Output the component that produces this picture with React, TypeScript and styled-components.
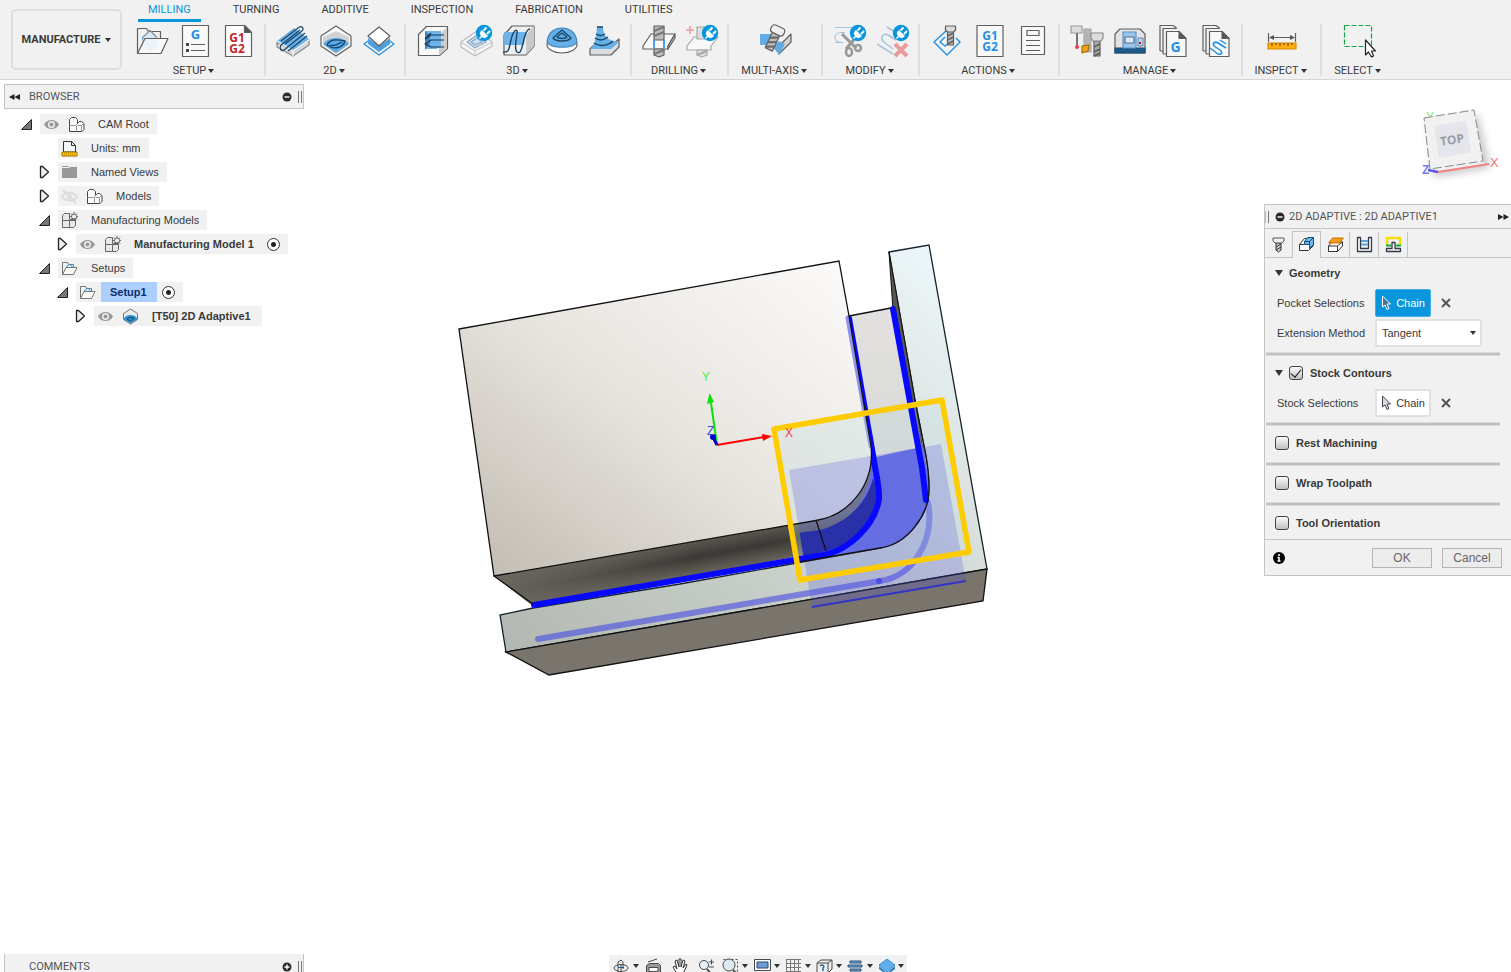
import React, { ReactNode } from "react";
import styled, { createGlobalStyle } from "styled-components";

const UI = `Roboto, "Liberation Sans", sans-serif`;
const BODY = `"Liberation Sans", Arial, sans-serif`;

const GlobalStyle = createGlobalStyle`
  * { box-sizing: border-box; }
  body { margin: 0; background: #fff; color: #3a3a3a; font: 11px/16px ${BODY}; }
  button, select, input { font: inherit; color: inherit; margin: 0; padding: 0; }
  svg { display: block; }
`;

/* ---------- page ---------- */
const Page = styled.div`
  display: flex;
  flex-direction: column;
  height: 100vh;
  overflow: hidden;
`;
const Header = styled.header`
  display: flex;
  flex: none;
  height: 80px;
  background: #f1f1f1;
  border-bottom: 1px solid #d6d6d6;
  font-family: ${UI};
`;
const WorkspaceButton = styled.button`
  display: flex;
  align-items: center;
  justify-content: center;
  gap: 5px;
  width: 111px;
  height: 61px;
  margin: 9px 3px 0 11px;
  border: 2px solid #dedede;
  border-radius: 5px;
  background: #f1f1f1;
  font-weight: 700;
`;
const Caret = styled.span`
  border: 3px solid transparent;
  border-top: 4px solid #333;
  border-bottom: 0;
`;
const Ribbon = styled.div`
  flex: 1;
  min-width: 0;
`;
const Tabs = styled.nav`
  display: flex;
  gap: 22px;
  height: 22px;
  padding-left: 13px;
`;
const Tab = styled.button<{ $active?: boolean }>`
  height: 22px;
  padding: 0 10px;
  border: 0;
  border-bottom: 3px solid ${(p) => (p.$active ? "#0a96dc" : "transparent")};
  background: none;
  color: ${(p) => (p.$active ? "#0a96dc" : "#3a3a3a")};
`;
const Groups = styled.div`
  display: flex;
`;
const Group = styled.section<{ $min?: number }>`
  display: flex;
  flex-direction: column;
  align-items: center;
  height: 52px;
  margin-top: 2px;
  min-width: ${(p) => p.$min ?? 0}px;
  padding: 0 4px 0 5px;
  border-right: 2px solid #dedede;
  &:last-child { border-right-color: transparent; }
`;
const Tools = styled.div`
  display: flex;
`;
const Tool = styled.button`
  display: grid;
  place-items: center;
  width: 43px;
  height: 34px;
  border: 0;
  background: none;
`;
const GroupLabel = styled.button`
  display: flex;
  align-items: center;
  gap: 2px;
  height: 16px;
  margin: 5px 3px 0 0;
  border: 0;
  background: none;
`;

const Workspace = styled.main`
  display: flex;
  flex: 1;
  min-height: 0;
`;
const BrowserColumn = styled.aside`
  width: 304px;
  flex: none;
  padding: 4px 0 0 4px;
`;
const PanelBar = styled.div`
  display: flex;
  align-items: center;
  height: 25px;
  padding: 0 1px 0 4px;
  border: 1px solid #c4c4c4;
  background: #f1f1f1;
  color: #555;
  font-family: ${UI};
`;
const BarTitle = styled.h2`
  flex: 1;
  margin: 0;
  font-size: 11px;
  font-weight: 400;
`;
const BarButton = styled.button`
  display: grid;
  place-items: center;
  width: 12px;
  height: 16px;
  border: 0;
  background: none;
`;
const CollapseButton = styled(BarButton)`
  width: 20px;
  justify-items: start;
`;
const Grip = styled.span`
  width: 4px;
  height: 12px;
  margin-left: 5px;
  border: 1px solid #777;
  border-width: 0 1px;
`;
const Tree = styled.ul`
  margin: 0;
  padding: 3px 0 0;
  list-style: none;
`;
const TreeRow = styled.li<{ $level: number }>`
  display: flex;
  align-items: center;
  height: 24px;
  padding-left: ${(p) => 14 + 18 * p.$level}px;
`;
const Twisty = styled.button`
  display: grid;
  place-items: center;
  width: 22px;
  height: 16px;
  padding-right: 6px;
  border: 0;
  background: none;
`;
const Item = styled.div`
  display: flex;
  align-items: center;
  height: 20px;
  padding-right: 3px;
  background: #f1f1f1;
`;
const Slot = styled.span<{ $gap?: boolean }>`
  display: grid;
  place-items: center;
  width: 22px;
  margin-right: ${(p) => (p.$gap ? 3 : 0)}px;
`;
const ItemLabel = styled.span<{ $bold?: boolean; $selected?: boolean }>`
  height: 20px;
  line-height: 20px;
  padding: 0 ${(p) => (p.$bold ? 8 : 5)}px 0 11px;
  font-weight: ${(p) => (p.$bold ? 700 : 400)};
  ${(p) => p.$selected && "margin-left: 3px; padding: 0 10px 0 9px; background: #abd0ff; color: #0b2f6b;"}
`;
const ActiveRadio = styled.input`
  appearance: none;
  width: 13px;
  height: 13px;
  margin: 0 5px;
  border: 1px solid #333;
  border-radius: 50%;
  background: radial-gradient(circle, #222 0 2px, #fff 3px);
`;

const Scene = styled.div`
  flex: 1;
  min-width: 0;
  svg { width: 100%; height: 100%; }
`;
const RightColumn = styled.aside`
  width: 247px;
  flex: none;
`;

/* ---------- dialog ---------- */
const Dialog = styled.form`
  border: 1px solid #c4c4c4;
  border-right: 0;
  background: #f1f1f1;
`;
const DialogBar = styled.div`
  display: flex;
  align-items: center;
  height: 24px;
  padding-right: 2px;
  border-bottom: 1px solid #c4c4c4;
  color: #555;
  font-family: ${UI};
`;
const DialogGrip = styled(Grip)`
  margin: 0 5px 0 0;
  border-left-color: #bbb;
`;
const DialogTitle = styled(BarTitle)`
  padding-left: 3px;
  white-space: nowrap;
`;
const DialogTabs = styled.div`
  display: flex;
  align-items: flex-end;
  height: 29px;
  border-bottom: 1px solid #c4c4c4;
`;
const DialogTab = styled.button<{ $active?: boolean }>`
  display: grid;
  place-items: center;
  width: 29px;
  height: ${(p) => (p.$active ? 27 : 25)}px;
  margin-bottom: ${(p) => (p.$active ? -1 : 0)}px;
  padding-bottom: 1px;
  border: 0 solid #c4c4c4;
  border-width: ${(p) => (p.$active ? "1px 1px 0 1px" : "0 1px 0 0")};
  background: #f1f1f1;
  &:first-child { width: 27px; border: 0; }
`;
const SectionHead = styled.div`
  display: flex;
  align-items: center;
  gap: 6px;
  height: 30px;
  padding-left: 10px;
  font-weight: 700;
`;
const CheckLabel = styled.label`
  display: flex;
  align-items: center;
  gap: 7px;
`;
const CheckBox = styled.input`
  appearance: none;
  display: grid;
  place-items: center;
  width: 14px;
  height: 14px;
  border: 1px solid #444;
  border-radius: 3px;
  background: linear-gradient(#fafafa, #c0c0c0);
  &:checked::after {
    content: "";
    width: 5px;
    height: 9px;
    margin-top: -2px;
    border: solid #111;
    border-width: 0 1px 1px 0;
    transform: rotate(40deg);
  }
`;
const Triangle = styled.span`
  border: 4px solid transparent;
  border-top: 6px solid #333;
  border-bottom: 0;
`;
const Field = styled.div`
  display: flex;
  align-items: center;
  height: 30px;
  padding-left: 12px;
`;
const FieldLabel = styled.label`
  width: 98px;
`;
const ChainButton = styled.button<{ $active?: boolean }>`
  display: flex;
  align-items: center;
  justify-content: center;
  gap: 4px;
  width: 56px;
  height: 28px;
  border: ${(p) => (p.$active ? "1px solid #45aee5" : "2px solid #e0e0e0")};
  border-radius: 2px;
  background: ${(p) => (p.$active ? "#0a96dc" : "#fff")};
  color: ${(p) => (p.$active ? "#fff" : "#3a3a3a")};
`;
const ClearButton = styled.button`
  display: grid;
  place-items: center;
  width: 16px;
  height: 16px;
  margin-left: 7px;
  border: 0;
  background: none;
`;
const SelectBox = styled.div`
  display: flex;
  align-items: center;
  position: relative;
  ${Caret} {
    position: absolute;
    right: 6px;
    pointer-events: none;
  }
`;
const Select = styled.select`
  appearance: none;
  width: 107px;
  height: 28px;
  padding: 0 5px;
  border: 2px solid #e0e0e0;
  border-radius: 2px;
  background: #fff;
`;
const Divider = styled.hr`
  height: 4px;
  margin: 4px 11px 2px 1px;
  border: 1px solid #dadada;
  border-width: 1px 0;
  background: #c0c0c0;
`;
const DialogFooter = styled.footer`
  display: flex;
  align-items: center;
  gap: 10px;
  height: 36px;
  margin-top: 1px;
  padding: 0 9px 0 8px;
  border-top: 1px solid #c4c4c4;
`;
const InfoButton = styled(BarButton)`
  margin-right: auto;
`;
const FooterButton = styled.button`
  width: 60px;
  height: 20px;
  border: 1px solid #b4b4b4;
  background: #ececec;
  color: #666;
  font-size: 12px;
  line-height: 16px;
`;

/* ---------- bottom ---------- */
const BottomBar = styled.footer`
  display: grid;
  grid-template-columns: 1fr auto 1fr;
  flex: none;
  align-items: start;
  height: 18px;
  padding-left: 4px;
  overflow: hidden;
`;
const CommentsBar = styled(PanelBar)`
  width: 300px;
  height: 26px;
  padding-left: 24px;
  border-top: 0;
`;
const NavBar = styled.nav`
  display: flex;
  height: 22px;
  margin-top: 1px;
  padding-left: 2px;
  background: #f1f1f1;
`;
const NavButton = styled.button<{ $w: number }>`
  display: flex;
  align-items: center;
  justify-content: center;
  gap: 3px;
  width: ${(p) => p.$w}px;
  height: 22px;
  border: 0;
  background: none;
`;

/* ---------- ribbon icons ---------- */
const Icon = ({ children }: { children: ReactNode }) => (
  <svg width="34" height="34" viewBox="0 0 34 34" fill="none" stroke="#5f5f5f" strokeWidth="1.2" strokeLinejoin="round">
    {children}
  </svg>
);
const Plug = () => (
  <g stroke="none">
    <circle cx="25" cy="9" r="8.2" fill="#0a96dc" />
    <path d="M20 14l2-2c-2-3-1-4 1-6l6 6c-2 2-4 3-6 1l-2 2z" fill="#fff" />
    <path d="M24.5 6.500l3-3M28 10l3-3" stroke="#fff" strokeWidth="1.8" />
  </g>
);
const CodeText = ({ x, y, lines, color, size = 12 }: { x: number; y: number; lines: string[]; color: string; size?: number }) => (
  <text y={y} fill={color} stroke="none" textAnchor="middle" fontFamily="Open Sans, sans-serif" fontWeight="700" fontSize={size}>
    {lines.map((l, i) => <tspan key={l} x={x} dy={i ? 11 : 0}>{l}</tspan>)}
  </text>
);
const Bolt = ({ x, y }: { x: number; y: number }) => (
  <g transform={`translate(${x} ${y})`}>
    <path d="M-3 5V19h6V5z" fill="#bbb" />
    <path d="M-3 10l6-3M-3 14l6-3M-3 18l6-3" strokeWidth="1.8" stroke="#666" />
    <path d="M-5 0H5V4L3 6H-3L-5 4z" fill="#ddd" />
  </g>
);

const icons: Record<string, ReactNode> = {
  setup: <Icon><path d="M2.500 29.500V4.500h9l2 3h12v7" /><path d="M7 16l8-8 8 8v6l-8 6-8-6z" fill="#d5e6f5" stroke="none" /><path d="M7 14l8-7.500 7 7" stroke="#888" /><path d="M7 13v4l2-3z" fill="#6bb5ea" stroke="none" /><path d="M2.500 29.500L10 14.500h23L26 29.500z" fill="#fff" fillOpacity=".55" /></Icon>,
  sheet: <Icon><rect x="4.500" y="1.500" width="26" height="31" fill="#fff" fillOpacity=".6" /><CodeText x={17.5} y={15} lines={["G"]} color="#1f8fe5" size={13} /><path d="M13 20.500h14M13 26.500h14" /><path d="M8 19h3v3H8zM8 25h3v3H8z" fill="#444" stroke="none" /></Icon>,
  post: <Icon><path d="M4.500 1.500h19l7 7v24h-26z" fill="#fff" /><path d="M23.500 1.500v7h7z" fill="#555" /><CodeText x={16} y={18} lines={["G1", "G2"]} color="#c52424" /></Icon>,
  adaptive2d: <Icon><path d="M1 18v5l16 9 16-11v-5L17 27z" fill="#d8d8d8" stroke="#888" /><path d="M1 17L18 4l15 11-16 12z" fill="#6bb0e6" stroke="none" /><path d="M17 27v5M1 17l16 10 16-11" stroke="#fff" /><path d="M5 17L22 4c3-3 7 0 4 3L9 20M8 26L29 9M5 21L24 6M8 26c-3 2-5-2-3-5M12 27L31 12" stroke="#17466b" strokeWidth="1.200" /></Icon>,
  pocket2d: <Icon><path d="M17 2l15 10v10L17 32 2 22V12z" fill="#fafafa" /><path d="M4 13l13-6 13 6v8L17 30 4 21z" fill="#d2d2d2" stroke="none" /><path d="M4 20c6-8 20-8 26 0l-13 9z" fill="#5ba9e4" stroke="none" /><path d="M8 21c3-6 9-6 18-4-2 7-11 9-18 4zM11 21c5 2 8-1 12-3" stroke="#17466b" strokeWidth="1.300" /></Icon>,
  contour2d: <Icon><path d="M6 17l-4 3 15 11 15-11-4-3" stroke="#1f8fe5" /><path d="M6 14v6l11 8 11-8v-6l-11 8z" fill="#4d9fdc" stroke="none" /><path d="M17 3l11 9-11 10L6 12z" fill="#fff" /></Icon>,
  adaptive3d: <Icon><path d="M2.500 10.500l8-8h21v22l-8 7h-21z" fill="#fafafa" /><path d="M31 3v21.500l-8 7V11z" fill="#ccc" stroke="none" /><path d="M9 7h16v16l-5 2H9z" fill="#6fb3e8" stroke="none" /><path d="M9 7l5 4v9l-5 6z" fill="#3b86c2" stroke="none" /><path d="M28 11H15l-6 4M28 16H15l-6 4 6 3h13M9 15l6-6" stroke="#17364f" strokeWidth="1.200" /></Icon>,
  pocket3d: <Icon><path d="M2 18L18 7l15 11v4L16 32 2 23z" fill="#f6f6f6" stroke="#bbb" /><path d="M16 27v5M2 18l14 9 17-9" stroke="#ccc" /><path d="M8 18l10-7 9 7-11 6z" fill="#cfe0f0" stroke="#8aa9c5" /><path d="M12 18l6-4 5 4-7 3z" stroke="#8aa9c5" /><Plug /></Icon>,
  parallel: <Icon><path d="M2 11L10 2h22v20l-8 9H2z" fill="#eee" /><path d="M24 11l8-9v20l-8 9z" fill="#c9c9c9" stroke="none" /><path d="M2 8h22l-2 13H2z" fill="#6fb3e8" stroke="none" /><path d="M1 28c6 1 6-3 8-12S14 5 15 7s-4 18 0 21 5-5 7-13 4-10 6-10" stroke="#17466b" strokeWidth="1.400" /></Icon>,
  scallop: <Icon><ellipse cx="17" cy="20.500" rx="15" ry="8.500" fill="#fff" /><path d="M2 18C3 8 10 4 17 4s14 4 15 14c-4 7-26 7-30 0z" fill="#66b0e7" stroke="#3e83b8" /><path d="M8 14l9-8 9 8c-3 4-15 4-18 0zM12 13l5-4 5 4c-2 2-8 2-10 0z" stroke="#17466b" strokeWidth="1.300" /></Icon>,
  steep: <Icon><path d="M2 25l6-6h18l5-4v8l-8 8H2z" fill="#ddd" /><path d="M9 3h6c0 9 5 14 16 15l-8 7H2c5-4 6-10 7-22z" fill="#66b0e7" stroke="none" /><path d="M9 3h6M8 10c3 2 6 2 9 0M7 14c4 3 9 2 13-1M6 19c6 4 14 3 19-2" stroke="#17466b" strokeWidth="1.400" /></Icon>,
  drill: <Icon><path d="M1 22L9 10h24l-7 12v3H1z" fill="#fafafa" /><path d="M26 22v3l7-11v-4z" fill="#bbb" /><path d="M12 2h10v14H12zM12 25h10v6l-5 2-5-2z" fill="#bcbcbc" /><path d="M12 7l10-4M12 12l10-4M12 30l10-4" stroke="#777" strokeWidth="2" /><path d="M12 16v8M22 16v8" stroke="#1f8fe5" strokeWidth="1.600" /></Icon>,
  holes: <Icon><path d="M1 6h8M5 2v8" stroke="#f29a9a" strokeWidth="1.500" /><g opacity=".5"><path d="M2 22l7-9h24l-7 9v4H2z" fill="#fff" /><path d="M12 3h10v12H12zM12 26h10v5l-5 2-5-2z" fill="#ccc" /><path d="M12 31l10-4" strokeWidth="2" /></g><Plug /></Icon>,
  multiaxis: <Icon><path d="M1 10h14v11H1z" fill="#62ade6" stroke="none" /><path d="M20 30L32 18V10L21 21z" fill="#d4d4d4" /><path d="M14 23l6-6 6 3-6 11z" fill="#62ade6" stroke="none" /><g transform="rotate(25 17 10) translate(0 2)"><path d="M13 8h8v17h-8z" fill="#bbb" /><path d="M13 14l8-4M13 19l8-4M13 24l8-4" stroke="#666" strokeWidth="2" /><rect x="10" y="0" width="14" height="8" rx="3" fill="#f0f0f0" /></g></Icon>,
  trim: <Icon><path d="M2 3.500h17M2 18.500h8M8 18.500C0 18 0 8.500 8 8.500h4" stroke="#a5c4df" /><path d="M9 10l14 14M24 12L13 25" stroke="#999" strokeWidth="3" /><ellipse cx="16" cy="28" rx="3" ry="4" stroke="#999" strokeWidth="2.500" /><ellipse cx="25" cy="24" rx="3" ry="3" stroke="#999" strokeWidth="2.500" /><Plug /></Icon>,
  remove: <Icon><path d="M11 3l8 5M1 20l16 10M17 25L8 18c-5-4 0-10 4-7l8 5" stroke="#a5c4df" strokeWidth="1.500" /><path d="M19 20l12 12M31 20L19 32" stroke="#e99a9a" strokeWidth="4" /><Plug /></Icon>,
  simulate: <Icon><path d="M17 6L4 18l13 13 13-13-4-4M15 13l-5 5 5 4 7-5" stroke="#1f8fe5" strokeWidth="1.400" /><Bolt x={20.5} y={2} /></Icon>,
  nc: <Icon><rect x="4" y="1.500" width="26" height="31" fill="#f8f8f8" /><CodeText x={17} y={16} lines={["G1", "G2"]} color="#1f8fe5" /></Icon>,
  report: <Icon><rect x="5.500" y="2.500" width="23" height="28" fill="#fff" fillOpacity=".5" /><path d="M11 6.500h12v5H11zM10 16.500h14M10 21.500h14M10 26.500h14" /></Icon>,
  library: <Icon><path d="M14 5h7v23h-7z" fill="#b5b5b5" stroke="#aaa" /><path d="M1 2h11v7H1z" fill="#ddd" stroke="#999" /><path d="M7 9v12" stroke="#777" strokeWidth="2" /><circle cx="7" cy="23" r="2" fill="#f33" stroke="none" /><path d="M12 22l7-1-1 6-6 2z" fill="#f5a51c" stroke="#a66b00" /><path d="M24 17h6v15h-6z" fill="#aaa" /><path d="M24 23l6-3M24 28l6-3M24 32l6-3" strokeWidth="1.800" /><path d="M21 9h12v5l-2 3h-8l-2-3z" fill="#ddd" stroke="#888" /></Icon>,
  machine: <Icon><path d="M2 10l5-5h20l5 5v19H2z" fill="#e3e3e3" /><path d="M2 24h30v5H2z" fill="#1d5c8a" stroke="#1d4f78" /><path d="M10 8h13v16H10z" fill="#9cc5ea" stroke="#5a8fc0" /><path d="M12 13h9v6h-9z" fill="#dce8f3" stroke="#47729b" /><path d="M25 14h5v8h-5z" fill="#b9d5ef" stroke="#47729b" strokeWidth=".8" /><path d="M26 18h2v2h-2z" fill="#d03" stroke="none" /></Icon>,
  postlib: <Icon><path d="M4 27V1.500h13M7 30V4.500h13" /><path d="M10.500 7.500H23l7 7v18H10.500zM4 27h3M7 30h3M17 1.500l4 3" fill="#f8f8f8" /><path d="M23 7.500v7h7z" fill="#555" /><CodeText x={19.5} y={28} lines={["G"]} color="#1f8fe5" size={14} /></Icon>,
  templates: <Icon><path d="M4 27V1.500h13M7 30V4.500h13" /><path d="M10.500 7.500H23l7 7v18H10.500zM4 27h3M7 30h3M17 1.500l4 3" fill="#f8f8f8" /><path d="M23 7.500v7h7z" fill="#555" /><path d="M11 24l8 6c4 1 5-2 2-4l-6-4c-2-3 1-5 4-3l8 5M21 16l6 4" stroke="#1f8fe5" strokeWidth="1.500" /></Icon>,
  measure: <Icon><path d="M3.500 9v9M30.500 9v9M5 13.500h24" /><path d="M4 13.500l5-2.500v5zM30 13.500l-5-2.500v5z" fill="#555" stroke="none" /><path d="M3 19h28v6H3z" fill="#ffae0d" stroke="#d98c00" /><path d="M7 19v3M11 19v2M15 19v3M19 19v2M23 19v3M27 19v2" stroke="#6d4700" /></Icon>,
  select: <Icon><path d="M2.500 1.500h27v21h-27z" stroke="#12a54a" strokeDasharray="5 2" /><path d="M23.500 16v15l3-3 3 5 2-1-2-5h4z" fill="#fff" stroke="#222" /></Icon>,
};

const ribbon: { label: string; tools: string[]; min?: number }[] = [
  { label: "SETUP", tools: ["setup", "sheet", "post"], min: 141 },
  { label: "2D", tools: ["adaptive2d", "pocket2d", "contour2d"] },
  { label: "3D", tools: ["adaptive3d", "pocket3d", "parallel", "scallop", "steep"] },
  { label: "DRILLING", tools: ["drill", "holes"] },
  { label: "MULTI-AXIS", tools: ["multiaxis"], min: 94 },
  { label: "MODIFY", tools: ["trim", "remove"] },
  { label: "ACTIONS", tools: ["simulate", "nc", "report"] },
  { label: "MANAGE", tools: ["library", "machine", "postlib", "templates"] },
  { label: "INSPECT", tools: ["measure"], min: 79 },
  { label: "SELECT", tools: ["select"], min: 75 },
];
const tabs = ["MILLING", "TURNING", "ADDITIVE", "INSPECTION", "FABRICATION", "UTILITIES"];

/* ---------- small icons ---------- */
const Small = ({ children, w = 17, h = 17 }: { children: ReactNode; w?: number; h?: number }) => (
  <svg width={w} height={h} viewBox={`0 0 ${w} ${h}`} fill="none" stroke="#4a4a4a" strokeLinejoin="round">{children}</svg>
);
const Eye = () => <Small><path d="M1 8.500C4 2.500 13 2.500 16 8.500 13 14.500 4 14.500 1 8.500z" fill="#999" stroke="none" /><circle cx="8.500" cy="8.500" r="3.500" fill="#eee" stroke="none" /><circle cx="8.500" cy="8.500" r="2" fill="#999" stroke="none" /></Small>;
const EyeOff = () => <Small><path d="M1 8.500C4 3.500 13 3.500 16 8.500 13 13.500 4 13.500 1 8.500zM2 2l13 13" stroke="#dcdcdc" strokeWidth="2" /><circle cx="8.500" cy="8.500" r="2.500" fill="#dcdcdc" stroke="none" /></Small>;
const Cubes = () => <Small><path d="M1.500 3.500l2-2h4l2 2v4l2-2h2l2.500 2v6l-2 2H1.500z" fill="#fafafa" stroke="#444" /><path d="M1.500 9.500h6l2-2M8.500 15.500V9.500M9.500 9.500h4l2-2M13.500 9.500v6" stroke="#999" /></Small>;
const CubesGear = () => <Small><path d="M1.500 3.500l2-2h5v6h6v6l-2 2h-11z" fill="#e8e8e8" stroke="#666" /><path d="M1.500 8.500h7v7M8.500 8.500h6" stroke="#666" /><circle cx="13" cy="4.500" r="2.500" fill="#f1f1f1" stroke="#666" /><path d="M13 0v2M13 7v2M9 4.500h1.500M15.500 4.500H17M10 1.500l1.500 1.500M16 1.500L14.500 3M10 7.500L11.500 6M16 7.500L14.500 6" stroke="#666" /></Small>;
const Units = () => <Small><path d="M2.500 12V1.500h8l4 4V12z" fill="#f2f6fb" stroke="#333" /><path d="M10.500 1.500v4h4" stroke="#333" /><path d="M1 12h15v4H1z" fill="#ffc400" stroke="#a57200" /><path d="M3 14h11" stroke="#a57200" strokeDasharray="1 1" /></Small>;
const Folder = () => <Small><path d="M1 2h6l1 1H1zM1 4h7l1-1h7v11H1z" fill="#999" stroke="none" /></Small>;
const OpenFolder = () => <Small><path d="M1.500 14.500V2.500h5l1 2h5v3" stroke="#777" /><path d="M5 7l4-3 3 4" stroke="#2b8ed6" /><path d="M1.500 14.500L5 7.500h11l-3.500 7z" fill="#fff" fillOpacity=".7" stroke="#777" /></Small>;
const PocketSmall = () => <Small><path d="M8.500 1l7 4.500v6l-7 4.500-7-4.500v-6z" fill="#eaeaea" stroke="#777" /><path d="M2 10c3-4 10-4 13 0v1.500l-6.500 4L2 11.500z" fill="#2f8ed0" stroke="none" /><path d="M5 11c2-2 5-2 7-1-2 3-5 3-7 1z" stroke="#11436b" /></Small>;

type Node = { level: number; open?: boolean; leaf?: boolean; eye?: "on" | "off"; icon: ReactNode; label: string; bold?: boolean; selected?: boolean; radio?: boolean };
const tree: Node[] = [
  { level: 0, open: true, eye: "on", icon: <Cubes />, label: "CAM Root" },
  { level: 1, leaf: true, icon: <Units />, label: "Units: mm" },
  { level: 1, icon: <Folder />, label: "Named Views" },
  { level: 1, eye: "off", icon: <Cubes />, label: "Models" },
  { level: 1, open: true, icon: <CubesGear />, label: "Manufacturing Models" },
  { level: 2, eye: "on", icon: <CubesGear />, label: "Manufacturing Model 1", bold: true, radio: true },
  { level: 1, open: true, icon: <OpenFolder />, label: "Setups" },
  { level: 2, open: true, icon: <OpenFolder />, label: "Setup1", bold: true, selected: true, radio: true },
  { level: 3, eye: "on", icon: <PocketSmall />, label: "[T50] 2D Adaptive1", bold: true },
];

const TwistyIcon = ({ open }: { open?: boolean }) => (
  <Small w={13} h={14}>
    {open ? <path d="M1.500 12.500h10v-10z" fill="#777" stroke="#222" /> : <path d="M2.500 1.500v11h2l6-5.500-6-5.500z" fill="#eee" stroke="#222" strokeWidth="1.300" />}
  </Small>
);
const Disc = ({ plus }: { plus?: boolean }) => (
  <Small w={10} h={10}><circle cx="5" cy="5" r="4.500" fill="#2b2b2b" stroke="none" /><path d={plus ? "M2.500 5h5M5 2.500v5" : "M2.500 5h5"} stroke="#fff" strokeWidth="1.400" /></Small>
);
const Rewind = ({ right }: { right?: boolean }) => (
  <Small w={11} h={8}><path d={right ? "M0 1l5.500 3L0 7zM5.500 1L11 4 5.500 7z" : "M5.500 1L0 4l5.500 3zM11 1L5.500 4 11 7z"} fill="#222" stroke="none" /></Small>
);
const Pointer = ({ active }: { active?: boolean }) => (
  <Small w={11} h={16}><path d="M1.500 1v11l2.500-2 2 4.500 2-1-2-4.500h3.500z" fill={active ? "#4b7390" : "#d5dbe5"} stroke={active ? "#fff" : "#444"} /></Small>
);
const Cross = () => <Small w={10} h={10}><path d="M1 1l8 8M9 1L1 9" stroke="#555" strokeWidth="2" /></Small>;

const dialogTabs: { name: string; icon: ReactNode }[] = [
  { name: "Tool", icon: <Small><path d="M6 7h5v7l-2.500 2L6 14z" fill="#ccc" stroke="#333" /><path d="M6 11l5-3M6 14l5-3" stroke="#333" /><path d="M3 2h11v3l-2 2H5L3 5z" fill="#eee" stroke="#555" /></Small> },
  { name: "Geometry", icon: <Small><path d="M1.500 8.500l5-6h9v7l-5 5h-9z" fill="#fff" stroke="#333" /><path d="M1.500 8.500h5" stroke="#333" /><path d="M6.500 5.500l3-4h6v7l-4 4v-4h-5z" fill="#6bb7ea" stroke="#175079" /><path d="M11.500 5.500l4-4M6.500 5.500h5v3" stroke="#175079" /></Small> },
  { name: "Heights", icon: <Small><path d="M1.500 10l4-4h10v4l-5 5.500h-9z" fill="#fff" stroke="#333" /><path d="M10.500 15.500V10l5-4M1.500 10h9" stroke="#333" /><path d="M1.500 7l4-5h11l-4 5z" fill="#f39b1e" stroke="#c97500" /></Small> },
  { name: "Passes", icon: <Small><path d="M1.500 1.500v14h14v-14h-3v11h-8v-11z" fill="#fff" stroke="#333b49" strokeWidth="1.300" /><path d="M5 5h7M5 8.500h7" stroke="#5ba4dd" strokeWidth="2" /></Small> },
  { name: "Linking", icon: <Small><path d="M2 9V2h13v7" stroke="#f6df00" strokeWidth="2.500" /><path d="M1 9.500h5M11 9.500h5" stroke="#22a245" strokeWidth="2" /><path d="M1.500 15.500v-3H7v-6h3v6h5.500v3z" fill="#f5f5f5" stroke="#333b49" strokeWidth="1.300" /></Small> },
];

const navItems: { name: string; w: number; menu?: boolean; icon: ReactNode }[] = [
  { name: "Orbit", w: 30, menu: true, icon: <Small><ellipse cx="8" cy="10" rx="7" ry="3.500" /><path d="M5 14V4l3-2 2 2v7" /><path d="M8 6v7M5 9.500h6" stroke="#245d8c" /></Small> },
  { name: "Look at", w: 26, icon: <Small><path d="M3 4l9-3M1.500 7.500l3-2h9l2 2v8h-14z" fill="#999" /><path d="M4 9.500h9v4H4z" fill="#fff" /></Small> },
  { name: "Pan", w: 27, icon: <Small><path d="M5 16L1 9l2-1 2 3-2-8 2-1 2 7V1h2v8l2-7 2 1-2 7 3-4 1 1-4 9z" fill="#fff" stroke="#333" /></Small> },
  { name: "Zoom", w: 25, icon: <Small><circle cx="6" cy="7" r="4.500" fill="#e5f0f7" /><path d="M9 11l4 5" strokeWidth="2" /><path d="M11 4h5M13.500 1.500v5M11 9h5" /></Small> },
  { name: "Zoom window", w: 32, menu: true, icon: <Small><path d="M1.500 1.500h14v14" strokeDasharray="2 2" /><circle cx="7" cy="7" r="6" fill="#dceaf0" /><path d="M11 12l4 4" strokeWidth="2" /></Small> },
  { name: "Display settings", w: 32, menu: true, icon: <Small><path d="M.5 1.500h16v11H.5zM5 15h7" fill="#fff" /><path d="M3 4h11v6H3z" fill="#6f9dd4" stroke="#274a76" /></Small> },
  { name: "Grid", w: 31, menu: true, icon: <Small><path d="M1 1.500h15M1 5.500h15M1 9.500h15M1 13.500h15M1.500 1v15M5.500 1v15M9.500 1v15M13.500 1v15" stroke="#777" /></Small> },
  { name: "Viewports", w: 31, menu: true, icon: <Small><path d="M1 5l4-3h11v9l-4 4H1zM1 5h11v10M12 5l4-3" fill="#eee" /><path d="M4 8c3-2 5 0 3 2v3" stroke="#236da8" strokeWidth="1.500" /></Small> },
  { name: "Toolpath display", w: 31, menu: true, icon: <Small><path d="M3 3h11v2H3zM1 7h14v2H1zM3 11h11v2H3z" fill="#75a9d8" stroke="#244f78" /></Small> },
  { name: "Stock", w: 31, menu: true, icon: <Small><path d="M1 7l8-6 8 6-8 7z" fill="#5fb0ea" stroke="#3d8fce" /><path d="M1 8l8 7 8-7v3l-8 6-8-6z" fill="#2f7fbd" stroke="none" /></Small> },
];

/* ---------- model view ---------- */
const BLOCK = "M459 329L839 261 849 316 871 446C875 484 850 515 816 520.500L494 576z";

const Model = () => (
  <svg viewBox="304 80 960 874" role="img" aria-label="Part with slot and toolpath selections">
    <defs>
      <linearGradient id="top" x1="0" y1="1" x2="1" y2="0">
        <stop offset="0" stopColor="#c0baaf" /><stop offset=".5" stopColor="#e8e5e0" /><stop offset="1" stopColor="#fdfcfb" />
      </linearGradient>
      <linearGradient id="ledge" x1="0" y1="1" x2="1" y2="0">
        <stop offset="0" stopColor="#b2b8b1" /><stop offset=".5" stopColor="#d0d6d1" /><stop offset="1" stopColor="#f1fbff" />
      </linearGradient>
      <linearGradient id="wall" gradientUnits="userSpaceOnUse" x1="650" y1="548" x2="657" y2="586">
        <stop offset="0" stopColor="#5d5a53" /><stop offset=".45" stopColor="#3b3935" /><stop offset="1" stopColor="#716d65" />
      </linearGradient>
      <linearGradient id="floor" x1="0" y1="0" x2="0" y2="1">
        <stop offset="0" stopColor="#e3e1df" /><stop offset="1" stopColor="#d0d4d3" />
      </linearGradient>
      <linearGradient id="end" x1="0" y1="0" x2="1" y2="0">
        <stop offset="0" stopColor="#6b675f" /><stop offset=".6" stopColor="#6b675f" stopOpacity="0" />
      </linearGradient>
      <clipPath id="plane"><path d="M789 470L941 444 966 581 812 607z" /></clipPath>
      <clipPath id="outsideBlock"><path clipRule="evenodd" d={`M304 80H1264V954H304z${BLOCK}`} /></clipPath>
    </defs>

    <path d="M849 316L891 308 929 487C928 515 910 546 880 548L800 562V520z" fill="url(#floor)" />
    <path d="M494 576L816 520C848 516 870 490 872 457L878 480C882 515 857 546 826 551L533 606z" fill="url(#wall)" />
    <path d="M494 576L816 520 826 551 533 606z" fill="url(#end)" />
    <path d="M889 252L929 245 987 569 506 652 500 615 533 608 680 584 880 548C908 544 930 514 929 487Q929 474 926 456L915 400z" fill="url(#ledge)" stroke="#14222a" strokeWidth="1.300" />
    <path d="M506 652L987 569 983 601 549 675z" fill="#79756d" stroke="#111" strokeWidth="1.300" />
    <path d="M889 252L893 310 926 485 929 487 915 400z" fill="#5a5750" stroke="#111" />
    <path d={BLOCK} fill="url(#top)" />

    <g fill="none" stroke="#3a3fe8" strokeOpacity=".55" strokeWidth="6" strokeLinecap="round">
      <path d="M848 318L871 446" strokeWidth="5" />
      <path d="M928 503C935 540 913 577 880 581L680 615 538 639" />
    </g>
    <circle cx="879" cy="581" r="3" fill="#4a4ee0" />

    <path d="M774 429L942 400 969 552 800 580z" fill="#bfdcdc" fillOpacity=".3" />
    <path d="M789 470L941 444 966 581 812 607z" fill="#5050e0" fillOpacity=".24" />
    <path d="M812 607L966 581" stroke="#3333c8" strokeWidth="2" />

    <g clipPath="url(#outsideBlock)">
      <g clipPath="url(#plane)">
        <path d="M872 458L924 446C926 470 930 485 929 492C926 520 908 544 880 548L800 562V533C850 530 872 500 872 458z" fill="#656de2" />
        <path d="M798 533L820 530C850 522 868 500 873 478L879 492C878 520 857 545 826 551L800 558z" fill="#2930a8" />
      </g>
      <g fill="none" stroke="#0808ff" strokeWidth="6" strokeLinecap="round">
        <path d="M849 318L873 455C876 475 880 488 879 499C875 525 848 553 817 556L800 559 534 605" />
        <path d="M893 309L922 468 926 500" />
      </g>
    </g>
    <g fill="none" stroke="#111" strokeWidth="1.300">
      <path d={BLOCK} />
      <path d="M494 576L533 604M849 316L891 308M816 520L826 551" />
      <path d="M915 400L926 456Q929 474 929 487C930 514 908 544 880 548L800 562" />
    </g>

    <path d="M774 429L942 400 969 552 800 580z" fill="none" stroke="#ffcc00" strokeWidth="5.500" strokeLinejoin="round" />

    <g strokeWidth="2" fontFamily="Liberation Sans, sans-serif" fontSize="12">
      <path d="M717 445L711 403" stroke="#0be20b" /><path d="M709.500 393L714 402 707 404z" fill="#0be20b" />
      <path d="M717 445L764 437" stroke="#f00" /><path d="M772 436L762 434 763 441z" fill="#f00" />
      <path d="M717 445L713 437" stroke="#00c" strokeWidth="3" /><circle cx="713" cy="437" r="3" fill="#00c" />
      <text x="702" y="381" fill="#4be84b">Y</text>
      <text x="785" y="437" fill="#f04040">X</text>
      <text x="707" y="435" fill="#4444e0">Z</text>
    </g>
  </svg>
);

const ViewCube = () => (
  <svg width="247" height="124" viewBox="1264 80 247 124" role="img" aria-label="View cube">
    <defs><filter id="soft" x="-30%" y="-30%" width="160%" height="160%"><feGaussianBlur stdDeviation="4" /></filter></defs>
    <path d="M1428 122L1478 115 1490 168 1434 177z" fill="#000" opacity=".22" filter="url(#soft)" />
    <text x="1426" y="121" fontFamily="Liberation Sans, sans-serif" fontSize="12" fill="#7cf07c">Y</text>
    <path d="M1424 118L1474 110 1483 161 1485 164 1438 172 1430 169z" fill="#f0f0f1" />
    <path d="M1424 118L1474 110 1483 161 1430 169z" fill="#f1f1f1" stroke="#8a8a8a" strokeDasharray="9 3" />
    <path d="M1434 126L1466 121 1471 152 1439 158z" fill="#e5e6ec" />
    <text x="1452" y="144" textAnchor="middle" transform="rotate(-8 1452 140)" fontFamily="Open Sans, sans-serif" fontSize="12" fontWeight="700" fill="#9b9ca6">TOP</text>
    <path d="M1438 172L1489 164" stroke="#f28080" strokeWidth="2" />
    <path d="M1428 170L1438 172" stroke="#5a5ae8" strokeWidth="2.500" />
    <text x="1422" y="174" fontFamily="Liberation Sans, sans-serif" fontSize="12" fontWeight="700" fill="#7777f2">Z</text>
    <text x="1490" y="167" fontFamily="Liberation Sans, sans-serif" fontSize="13" fill="#f27777">X</text>
  </svg>
);

export default function App() {
  return (
    <Page>
      <GlobalStyle />
      <Header>
        <WorkspaceButton>MANUFACTURE <Caret /></WorkspaceButton>
        <Ribbon>
          <Tabs>
            {tabs.map((t, i) => <Tab key={t} $active={i === 0}>{t}</Tab>)}
          </Tabs>
          <Groups>
            {ribbon.map((g) => (
              <Group key={g.label} $min={g.min}>
                <Tools>
                  {g.tools.map((t) => <Tool key={t} aria-label={t}>{icons[t]}</Tool>)}
                </Tools>
                <GroupLabel>{g.label} <Caret /></GroupLabel>
              </Group>
            ))}
          </Groups>
        </Ribbon>
      </Header>

      <Workspace>
        <BrowserColumn>
          <PanelBar>
            <CollapseButton aria-label="Collapse browser"><Rewind /></CollapseButton>
            <BarTitle>BROWSER</BarTitle>
            <BarButton aria-label="Minimize"><Disc /></BarButton>
            <Grip />
          </PanelBar>
          <Tree>
            {tree.map((n) => (
              <TreeRow key={n.label} $level={n.level}>
                {n.leaf ? <Slot /> : <Twisty aria-label={`Toggle ${n.label}`}><TwistyIcon open={n.open} /></Twisty>}
                <Item>
                  {n.eye && <Slot $gap>{n.eye === "on" ? <Eye /> : <EyeOff />}</Slot>}
                  <Slot>{n.icon}</Slot>
                  <ItemLabel $bold={n.bold} $selected={n.selected}>{n.label}</ItemLabel>
                  {n.radio && <ActiveRadio type="radio" name={n.label} defaultChecked aria-label={`Activate ${n.label}`} />}
                </Item>
              </TreeRow>
            ))}
          </Tree>
        </BrowserColumn>

        <Scene><Model /></Scene>

        <RightColumn>
          <ViewCube />
          <Dialog onSubmit={(e) => e.preventDefault()}>
            <DialogBar>
              <DialogGrip />
              <BarButton type="button" aria-label="Minimize"><Disc /></BarButton>
              <DialogTitle>2D ADAPTIVE : 2D ADAPTIVE1</DialogTitle>
              <BarButton type="button" aria-label="Collapse dialog"><Rewind right /></BarButton>
            </DialogBar>
            <DialogTabs>
              {dialogTabs.map((t) => (
                <DialogTab key={t.name} type="button" aria-label={t.name} $active={t.name === "Geometry"}>{t.icon}</DialogTab>
              ))}
            </DialogTabs>
            <SectionHead><Triangle /> Geometry</SectionHead>
            <Field>
              <FieldLabel htmlFor="pocket">Pocket Selections</FieldLabel>
              <ChainButton id="pocket" type="button" $active><Pointer active />Chain</ChainButton>
              <ClearButton type="button" aria-label="Clear pocket selections"><Cross /></ClearButton>
            </Field>
            <Field>
              <FieldLabel htmlFor="extension">Extension Method</FieldLabel>
              <SelectBox>
                <Select id="extension" defaultValue="Tangent"><option>Tangent</option></Select>
                <Caret />
              </SelectBox>
            </Field>
            <Divider />
            <SectionHead>
              <Triangle />
              <CheckLabel><CheckBox type="checkbox" defaultChecked />Stock Contours</CheckLabel>
            </SectionHead>
            <Field>
              <FieldLabel htmlFor="stock">Stock Selections</FieldLabel>
              <ChainButton id="stock" type="button"><Pointer />Chain</ChainButton>
              <ClearButton type="button" aria-label="Clear stock selections"><Cross /></ClearButton>
            </Field>
            {["Rest Machining", "Wrap Toolpath", "Tool Orientation"].map((name) => (
              <React.Fragment key={name}>
                <Divider />
                <SectionHead>
                  <CheckLabel><CheckBox type="checkbox" />{name}</CheckLabel>
                </SectionHead>
              </React.Fragment>
            ))}
            <DialogFooter>
              <InfoButton type="button" aria-label="Information">
                <Small w={12} h={12}><circle cx="6" cy="6" r="6" fill="#000" stroke="none" /><path d="M6 2v2M4.500 5.500H6V9M4.500 9h3" stroke="#fff" strokeWidth="1.600" /></Small>
              </InfoButton>
              <FooterButton type="submit">OK</FooterButton>
              <FooterButton type="button">Cancel</FooterButton>
            </DialogFooter>
          </Dialog>
        </RightColumn>
      </Workspace>

      <BottomBar>
        <CommentsBar>
          <BarTitle>COMMENTS</BarTitle>
          <BarButton aria-label="Add comment"><Disc plus /></BarButton>
          <Grip />
        </CommentsBar>
        <NavBar>
          {navItems.map((n) => (
            <NavButton key={n.name} $w={n.w} aria-label={n.name}>{n.icon}{n.menu && <Caret />}</NavButton>
          ))}
        </NavBar>
      </BottomBar>
    </Page>
  );
}
